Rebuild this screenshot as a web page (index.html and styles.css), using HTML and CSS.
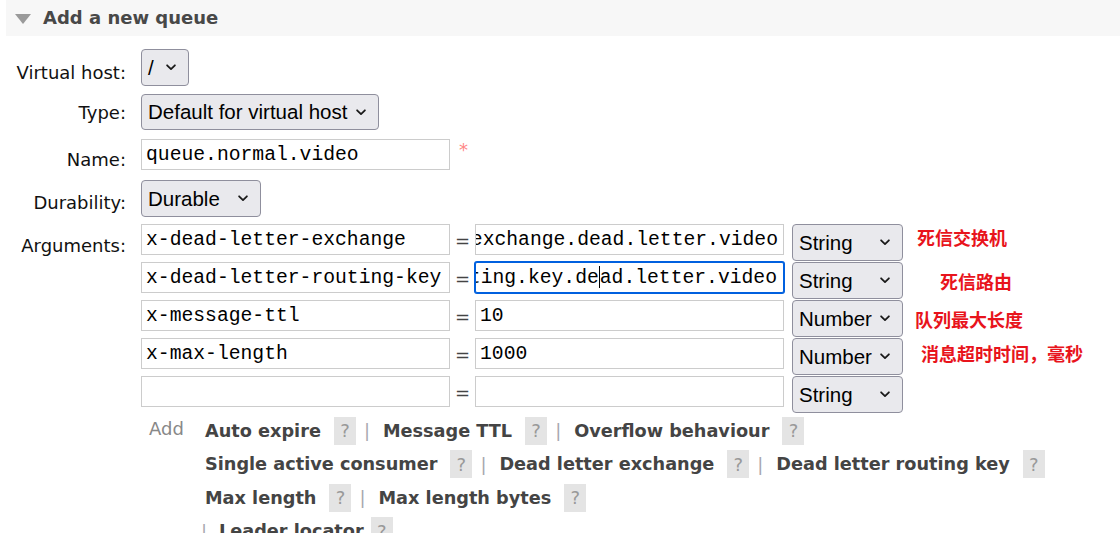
FILE: index.html
```html
<!DOCTYPE html>
<html lang="zh">
<head>
<meta charset="utf-8">
<title>Add a new queue</title>
<link rel="stylesheet" href="styles.css">
</head>
<body>
<div class="section">
  <div class="section-head"><span class="tri"></span><h2>Add a new queue</h2></div>
  <div class="form">
    <div class="row row-vhost">
      <label class="lbl">Virtual host:</label>
      <div class="select sel-vhost"><span>/</span><svg class="chev" viewBox="0 0 9 6"><path d="M1 1L4.5 4.5L8 1"/></svg></div>
    </div>
    <div class="row row-type">
      <label class="lbl">Type:</label>
      <div class="select sel-type"><span>Default for virtual host</span><svg class="chev" viewBox="0 0 9 6"><path d="M1 1L4.5 4.5L8 1"/></svg></div>
    </div>
    <div class="row row-name">
      <label class="lbl">Name:</label>
      <input class="input" type="text" value="queue.normal.video">
      <span class="mand">*</span>
    </div>
    <div class="row row-dur">
      <label class="lbl">Durability:</label>
      <div class="select sel-dur"><span>Durable</span><svg class="chev" viewBox="0 0 9 6"><path d="M1 1L4.5 4.5L8 1"/></svg></div>
    </div>
    <div class="row row-args">
      <label class="lbl">Arguments:</label>
      <div class="args">
        <div class="arg">
          <input class="input" type="text" value="x-dead-letter-exchange">
          <span class="eq">=</span>
          <div class="input scrolled"><span>exchange.dead.letter.video</span></div>
          <div class="select sel-arg"><span>String</span><svg class="chev" viewBox="0 0 9 6"><path d="M1 1L4.5 4.5L8 1"/></svg></div>
          <span class="note note1">死信交换机</span>
        </div>
        <div class="arg">
          <input class="input" type="text" value="x-dead-letter-routing-key">
          <span class="eq">=</span>
          <div class="input scrolled focused"><span>routing.key.de<i class="caret"></i>ad.letter.video</span></div>
          <div class="select sel-arg"><span>String</span><svg class="chev" viewBox="0 0 9 6"><path d="M1 1L4.5 4.5L8 1"/></svg></div>
          <span class="note note2">死信路由</span>
        </div>
        <div class="arg">
          <input class="input" type="text" value="x-message-ttl">
          <span class="eq">=</span>
          <input class="input" type="text" value="10">
          <div class="select sel-arg"><span>Number</span><svg class="chev" viewBox="0 0 9 6"><path d="M1 1L4.5 4.5L8 1"/></svg></div>
          <span class="note note3">队列最大长度</span>
        </div>
        <div class="arg">
          <input class="input" type="text" value="x-max-length">
          <span class="eq">=</span>
          <input class="input" type="text" value="1000">
          <div class="select sel-arg"><span>Number</span><svg class="chev" viewBox="0 0 9 6"><path d="M1 1L4.5 4.5L8 1"/></svg></div>
          <span class="note note4">消息超时时间，毫秒</span>
        </div>
        <div class="arg">
          <input class="input" type="text" value="">
          <span class="eq">=</span>
          <input class="input" type="text" value="">
          <div class="select sel-arg"><span>String</span><svg class="chev" viewBox="0 0 9 6"><path d="M1 1L4.5 4.5L8 1"/></svg></div>
        </div>
        <div class="add">
          <span class="add-label">Add</span>
          <div class="add-links">
            <div class="line">
              <span class="link">Auto expire</span><span class="help">?</span><span class="sep">|</span>
              <span class="link">Message TTL</span><span class="help">?</span><span class="sep">|</span>
              <span class="link">Overflow behaviour</span><span class="help">?</span>
            </div>
            <div class="line">
              <span class="link">Single active consumer</span><span class="help">?</span><span class="sep">|</span>
              <span class="link">Dead letter exchange</span><span class="help">?</span><span class="sep">|</span>
              <span class="link">Dead letter routing key</span><span class="help">?</span>
            </div>
            <div class="line">
              <span class="link">Max length</span><span class="help">?</span><span class="sep">|</span>
              <span class="link">Max length bytes</span><span class="help">?</span>
            </div>
            <div class="line line-last">
              <span class="sep sep-lead">|</span>
              <span class="link">Leader locator</span><span class="help help-tight">?</span>
            </div>
          </div>
        </div>
      </div>
    </div>
  </div>
</div>
</body>
</html>
```
FILE: styles.css
```css
* { box-sizing: border-box; }

html, body {
  margin: 0;
  padding: 0;
}

body {
  width: 1120px;
  height: 533px;
  overflow: hidden;
  background: #fff;
  padding-left: 6px;
  font-family: "DejaVu Sans", Verdana, sans-serif;
  font-size: 18px;
  color: #000;
}

.section-head {
  height: 36px;
  background: #f7f7f7;
  display: flex;
  align-items: center;
  padding-left: 9px;
}

.tri {
  width: 0;
  height: 0;
  border-left: 8.5px solid transparent;
  border-right: 8.5px solid transparent;
  border-top: 10px solid #9a9a9a;
  margin-right: 12px;
  margin-top: 1px;
}

.section-head h2 {
  margin: 0;
  font-size: 18px;
  line-height: 22px;
  font-weight: 700;
  color: #484848;
}

.form {
  margin-top: 13px;
}

.row {
  display: flex;
  align-items: flex-start;
}

.lbl {
  width: 120px;
  flex: none;
  margin-right: 15px;
  text-align: right;
  line-height: 22px;
  color: #111;
}

.row-vhost { margin-bottom: 8px; }
.row-vhost .lbl { padding-top: 12.5px; }
.row-type { margin-bottom: 9px; }
.row-type .lbl { padding-top: 7.5px; }
.row-name { margin-bottom: 9px; }
.row-name .lbl { padding-top: 10px; }
.row-dur { margin-bottom: 7px; }
.row-dur .lbl { padding-top: 12px; }
.row-args .lbl { padding-top: 11px; }

/* select look-alike */
.select {
  display: flex;
  align-items: center;
  flex: none;
  height: 37px;
  padding: 0 12px 0 6px;
  background: #e9e9ed;
  border: 1px solid #8f8f9d;
  border-radius: 4px;
  font-family: "Liberation Sans", Arial, sans-serif;
  font-size: 20.5px;
  color: #000;
  white-space: nowrap;
}

.select .chev {
  width: 10px;
  height: 7px;
  margin-left: auto;
  fill: none;
  stroke: #1a1a1a;
  stroke-width: 1.6;
  stroke-linecap: round;
  stroke-linejoin: round;
}

.sel-vhost { width: 48px; }
.sel-type { width: 238px; height: 36px; }
.sel-dur { width: 120px; }
.sel-arg { width: 111px; margin-left: 8px; }

/* text inputs */
.input {
  flex: none;
  width: 309px;
  height: 31px;
  margin: 0;
  padding: 0 4px;
  border: 1px solid #cccccc;
  border-radius: 0;
  background: #fff;
  font-family: "Liberation Mono", "Courier New", monospace;
  font-size: 19.7px;
  color: #000;
  outline: none;
}

.scrolled {
  display: flex;
  align-items: center;
  justify-content: flex-end;
  overflow: hidden;
  white-space: nowrap;
  padding: 0 5px 0 0;
}

.scrolled span {
  flex: none;
}

.focused {
  border-color: #0060df;
  border-radius: 2px;
  box-shadow: 0 0 0 1px #0060df;
  padding-right: 6px;
}

.caret {
  display: inline-block;
  width: 1px;
  height: 22px;
  background: #000;
  vertical-align: -5px;
}

.mand {
  margin-left: 9px;
  color: #f88;
  font-size: 18px;
  line-height: 22px;
}

.args {
  display: flex;
  flex-direction: column;
}

.arg {
  display: flex;
  align-items: flex-start;
  height: 38px;
}

.eq {
  width: 25px;
  flex: none;
  text-align: center;
  line-height: 31px;
  padding-top: 1px;
  color: #444;
}

.note {
  font-family: "Noto Sans CJK SC", "Noto Sans", sans-serif;
  font-weight: 700;
  font-size: 18px;
  line-height: 22px;
  color: #e8141c;
  white-space: nowrap;
}

.note1 { margin-left: 14px; padding-top: 2px; }
.note2 { margin-left: 37px; padding-top: 8px; }
.note3 { margin-left: 12px; padding-top: 8px; }
.note4 { margin-left: 18px; padding-top: 4px; }

/* add argument links */
.add {
  display: flex;
  align-items: flex-start;
}

.add-label {
  width: 64px;
  flex: none;
  padding-left: 8px;
  padding-top: 4px;
  line-height: 22px;
  color: #888;
}

.line {
  display: flex;
  align-items: center;
  height: 33.5px;
  white-space: nowrap;
}

.link {
  font-weight: 700;
  font-size: 17.7px;
  color: #444;
}

.help {
  display: inline-flex;
  align-items: center;
  justify-content: center;
  width: 22px;
  height: 28px;
  margin-left: 13px;
  background: #e4e4e4;
  color: #999;
  font-size: 18px;
}

.help-tight { margin-left: 7px; }

.sep {
  width: 27px;
  padding-left: 8px;
  color: #a8a8b0;
  flex: none;
}

.sep-lead {
  width: 18px;
  padding-left: 0;
  margin-left: -4px;
}
```
